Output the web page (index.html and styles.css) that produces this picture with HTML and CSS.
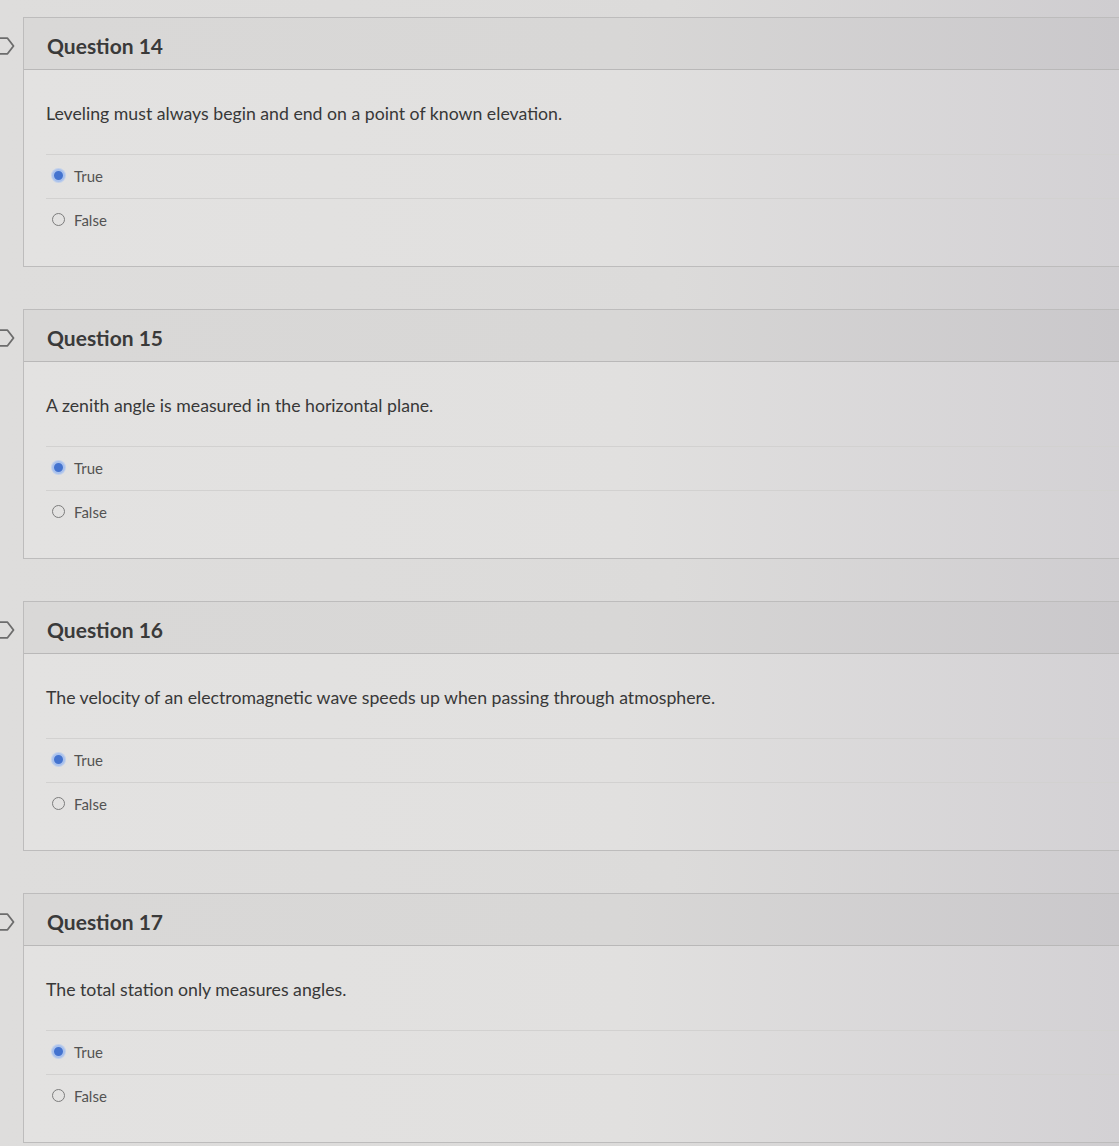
FILE: index.html
```html
<!doctype html>
<html lang="en">
 <head>
	<meta charset="UTF-8">
	<title>Quiz</title>
	<link rel="stylesheet" href="styles.css">
 </head>
 <body>
	<div class="quiz">
		<div class="question">
			<div class="flag-col">
				<svg class="flag" width="24" height="18" viewBox="0 0 24 18"><path d="M1 1.2 H15.5 L21.5 9 L15.5 16.8 H1 Z" fill="none" stroke="#6c6c6c" stroke-width="1.8" stroke-linejoin="round"/></svg>
			</div>
			<div class="card">
				<div class="card-head">Question 14</div>
				<div class="card-body">
					<p class="q-text">Leveling must always begin and end on a point of known elevation.</p>
					<ul class="answers">
						<li><span class="radio checked"></span>True</li>
						<li><span class="radio"></span>False</li>
					</ul>
				</div>
			</div>
		</div>
		<div class="question">
			<div class="flag-col">
				<svg class="flag" width="24" height="18" viewBox="0 0 24 18"><path d="M1 1.2 H15.5 L21.5 9 L15.5 16.8 H1 Z" fill="none" stroke="#6c6c6c" stroke-width="1.8" stroke-linejoin="round"/></svg>
			</div>
			<div class="card">
				<div class="card-head">Question 15</div>
				<div class="card-body">
					<p class="q-text">A zenith angle is measured in the horizontal plane.</p>
					<ul class="answers">
						<li><span class="radio checked"></span>True</li>
						<li><span class="radio"></span>False</li>
					</ul>
				</div>
			</div>
		</div>
		<div class="question">
			<div class="flag-col">
				<svg class="flag" width="24" height="18" viewBox="0 0 24 18"><path d="M1 1.2 H15.5 L21.5 9 L15.5 16.8 H1 Z" fill="none" stroke="#6c6c6c" stroke-width="1.8" stroke-linejoin="round"/></svg>
			</div>
			<div class="card">
				<div class="card-head">Question 16</div>
				<div class="card-body">
					<p class="q-text">The velocity of an electromagnetic wave speeds up when passing through atmosphere.</p>
					<ul class="answers">
						<li><span class="radio checked"></span>True</li>
						<li><span class="radio"></span>False</li>
					</ul>
				</div>
			</div>
		</div>
		<div class="question">
			<div class="flag-col">
				<svg class="flag" width="24" height="18" viewBox="0 0 24 18"><path d="M1 1.2 H15.5 L21.5 9 L15.5 16.8 H1 Z" fill="none" stroke="#6c6c6c" stroke-width="1.8" stroke-linejoin="round"/></svg>
			</div>
			<div class="card">
				<div class="card-head">Question 17</div>
				<div class="card-body">
					<p class="q-text">The total station only measures angles.</p>
					<ul class="answers">
						<li><span class="radio checked"></span>True</li>
						<li><span class="radio"></span>False</li>
					</ul>
				</div>
			</div>
		</div>
	</div>
 </body>
</html>
```

FILE: styles.css
```css
*{
	padding:0;
	margin:0;
	box-sizing:border-box;
}
body{
	background:linear-gradient(90deg,#dedddc 0%,#dcdbda 60%,#cfcdd0 100%);
	font-family:Lato,'Open Sans',sans-serif;
	color:#3b3b3b;
	overflow:hidden;
}
.quiz{
	padding-top:17px;
}
.question{
	display:flex;
	margin-bottom:42px;
}
.flag-col{
	width:23px;
	flex:none;
	overflow:hidden;
	padding-top:20px;
}
.flag{
	display:block;
	margin-left:-8px;
}
.card{
	flex:1;
	border:1px solid #bdbcbc;
	border-right:none;
	background:linear-gradient(90deg,#e3e2e1 0%,#e1e0df 55%,#d3d1d4 100%);
}
.card-head{
	height:52px;
	padding:3px 23px 0;
	display:flex;
	align-items:center;
	font-size:21px;
	font-weight:700;
	color:#3a3a3a;
	background:linear-gradient(90deg,#d9d8d7 0%,#d8d7d6 55%,#cac8cb 100%);
	border-bottom:1px solid #b9b8b8;
}
.card-body{
	padding-bottom:24px;
}
.q-text{
	font-size:17.7px;
	line-height:22px;
	padding:33px 22px 29px;
	color:#383838;
}
.answers{
	list-style:none;
	margin-left:22px;
}
.answers li{
	height:44px;
	display:flex;
	align-items:center;
	padding-left:6px;
	padding-bottom:2px;
	border-top:1px solid #d2d1d0;
	font-size:15px;
	color:#535353;
}
.radio{
	width:13px;
	height:13px;
	border-radius:50%;
	border:1.5px solid #7c7c7c;
	margin-right:9px;
	flex:none;
}
.radio.checked{
	border:2.5px solid #a9c1ec;
	background:#4473cf;
	box-shadow:0 0 0 1px #c3d1ea;
}
```
